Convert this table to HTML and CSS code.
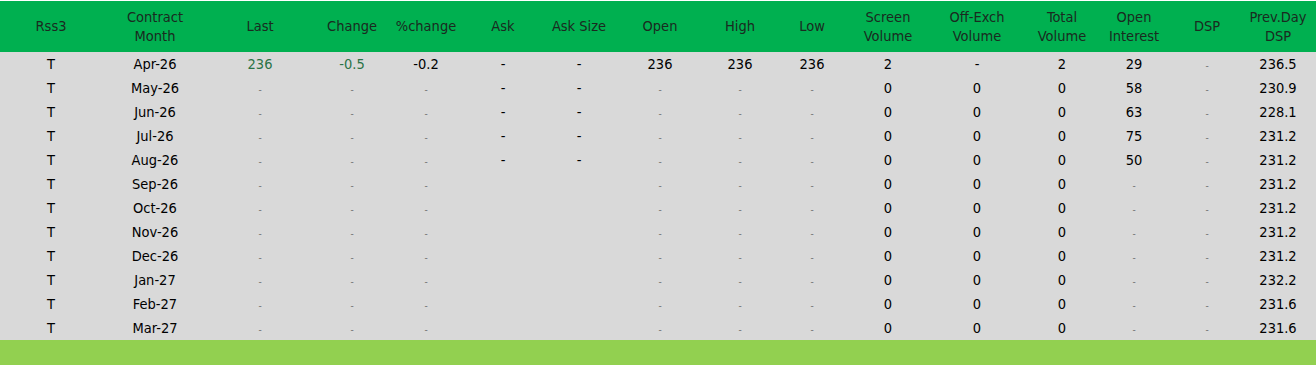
FILE: index.html
```html
<!DOCTYPE html>
<html>
<head>
<meta charset="utf-8">
<link rel="stylesheet" href="styles.css">
</head>
<body>
<div class="board">
<table class="grid">
<colgroup>
<col style="width:102px"><col style="width:106px"><col style="width:104px"><col style="width:80px">
<col style="width:68px"><col style="width:86px"><col style="width:66px"><col style="width:96px">
<col style="width:64px"><col style="width:80px"><col style="width:72px"><col style="width:106px">
<col style="width:64px"><col style="width:80px"><col style="width:66px"><col style="width:76px">
</colgroup>
<thead>
<tr>
<th>Rss3</th><th>Contract<br>Month</th><th>Last</th><th>Change</th><th>%change</th><th>Ask</th><th>Ask Size</th><th>Open</th><th>High</th><th>Low</th><th>Screen<br>Volume</th><th>Off-Exch<br>Volume</th><th>Total<br>Volume</th><th>Open<br>Interest</th><th>DSP</th><th>Prev.Day<br>DSP</th>
</tr>
</thead>
<tbody>
<tr><td>T</td><td>Apr-26</td><td class="up">236</td><td class="up">-0.5</td><td>-0.2</td><td>-</td><td>-</td><td>236</td><td>236</td><td>236</td><td>2</td><td>-</td><td>2</td><td>29</td><td><span class="nil">-</span></td><td>236.5</td></tr>
<tr><td>T</td><td>May-26</td><td><span class="nil">-</span></td><td><span class="nil">-</span></td><td><span class="nil">-</span></td><td>-</td><td>-</td><td><span class="nil">-</span></td><td><span class="nil">-</span></td><td><span class="nil">-</span></td><td>0</td><td>0</td><td>0</td><td>58</td><td><span class="nil">-</span></td><td>230.9</td></tr>
<tr><td>T</td><td>Jun-26</td><td><span class="nil">-</span></td><td><span class="nil">-</span></td><td><span class="nil">-</span></td><td>-</td><td>-</td><td><span class="nil">-</span></td><td><span class="nil">-</span></td><td><span class="nil">-</span></td><td>0</td><td>0</td><td>0</td><td>63</td><td><span class="nil">-</span></td><td>228.1</td></tr>
<tr><td>T</td><td>Jul-26</td><td><span class="nil">-</span></td><td><span class="nil">-</span></td><td><span class="nil">-</span></td><td>-</td><td>-</td><td><span class="nil">-</span></td><td><span class="nil">-</span></td><td><span class="nil">-</span></td><td>0</td><td>0</td><td>0</td><td>75</td><td><span class="nil">-</span></td><td>231.2</td></tr>
<tr><td>T</td><td>Aug-26</td><td><span class="nil">-</span></td><td><span class="nil">-</span></td><td><span class="nil">-</span></td><td>-</td><td>-</td><td><span class="nil">-</span></td><td><span class="nil">-</span></td><td><span class="nil">-</span></td><td>0</td><td>0</td><td>0</td><td>50</td><td><span class="nil">-</span></td><td>231.2</td></tr>
<tr><td>T</td><td>Sep-26</td><td><span class="nil">-</span></td><td><span class="nil">-</span></td><td><span class="nil">-</span></td><td></td><td></td><td><span class="nil">-</span></td><td><span class="nil">-</span></td><td><span class="nil">-</span></td><td>0</td><td>0</td><td>0</td><td><span class="nil">-</span></td><td><span class="nil">-</span></td><td>231.2</td></tr>
<tr><td>T</td><td>Oct-26</td><td><span class="nil">-</span></td><td><span class="nil">-</span></td><td><span class="nil">-</span></td><td></td><td></td><td><span class="nil">-</span></td><td><span class="nil">-</span></td><td><span class="nil">-</span></td><td>0</td><td>0</td><td>0</td><td><span class="nil">-</span></td><td><span class="nil">-</span></td><td>231.2</td></tr>
<tr><td>T</td><td>Nov-26</td><td><span class="nil">-</span></td><td><span class="nil">-</span></td><td><span class="nil">-</span></td><td></td><td></td><td><span class="nil">-</span></td><td><span class="nil">-</span></td><td><span class="nil">-</span></td><td>0</td><td>0</td><td>0</td><td><span class="nil">-</span></td><td><span class="nil">-</span></td><td>231.2</td></tr>
<tr><td>T</td><td>Dec-26</td><td><span class="nil">-</span></td><td><span class="nil">-</span></td><td><span class="nil">-</span></td><td></td><td></td><td><span class="nil">-</span></td><td><span class="nil">-</span></td><td><span class="nil">-</span></td><td>0</td><td>0</td><td>0</td><td><span class="nil">-</span></td><td><span class="nil">-</span></td><td>231.2</td></tr>
<tr><td>T</td><td>Jan-27</td><td><span class="nil">-</span></td><td><span class="nil">-</span></td><td><span class="nil">-</span></td><td></td><td></td><td><span class="nil">-</span></td><td><span class="nil">-</span></td><td><span class="nil">-</span></td><td>0</td><td>0</td><td>0</td><td><span class="nil">-</span></td><td><span class="nil">-</span></td><td>232.2</td></tr>
<tr><td>T</td><td>Feb-27</td><td><span class="nil">-</span></td><td><span class="nil">-</span></td><td><span class="nil">-</span></td><td></td><td></td><td><span class="nil">-</span></td><td><span class="nil">-</span></td><td><span class="nil">-</span></td><td>0</td><td>0</td><td>0</td><td><span class="nil">-</span></td><td><span class="nil">-</span></td><td>231.6</td></tr>
<tr><td>T</td><td>Mar-27</td><td><span class="nil">-</span></td><td><span class="nil">-</span></td><td><span class="nil">-</span></td><td></td><td></td><td><span class="nil">-</span></td><td><span class="nil">-</span></td><td><span class="nil">-</span></td><td>0</td><td>0</td><td>0</td><td><span class="nil">-</span></td><td><span class="nil">-</span></td><td>231.6</td></tr>
</tbody>
</table>
<div class="footer"></div>
</div>
</body>
</html>
```
FILE: styles.css
```css
html, body {
  margin: 0;
  padding: 0;
  background: #ffffff;
}

.board {
  width: 1316px;
  padding-top: 1px;
  font-family: "DejaVu Sans Condensed", "DejaVu Sans", sans-serif;
  font-stretch: condensed;
  font-size: 14.5px;
  color: #000000;
}

.grid {
  width: 1316px;
  border-collapse: collapse;
  table-layout: fixed;
}

.grid th {
  background: #00b050;
  color: #1a2a20;
  font-weight: normal;
  height: 51px;
  padding: 0;
  line-height: 19px;
  text-align: center;
  vertical-align: middle;
}

.grid td {
  background: #d9d9d9;
  height: 24px;
  padding: 0;
  text-align: center;
  vertical-align: middle;
  line-height: 18px;
  white-space: nowrap;
}

.grid td.up {
  color: #2a7346;
}

.nil {
  font-size: 10px;
  line-height: 1;
  color: #777777;
}

.footer {
  height: 25px;
  background: #92d050;
}
```
